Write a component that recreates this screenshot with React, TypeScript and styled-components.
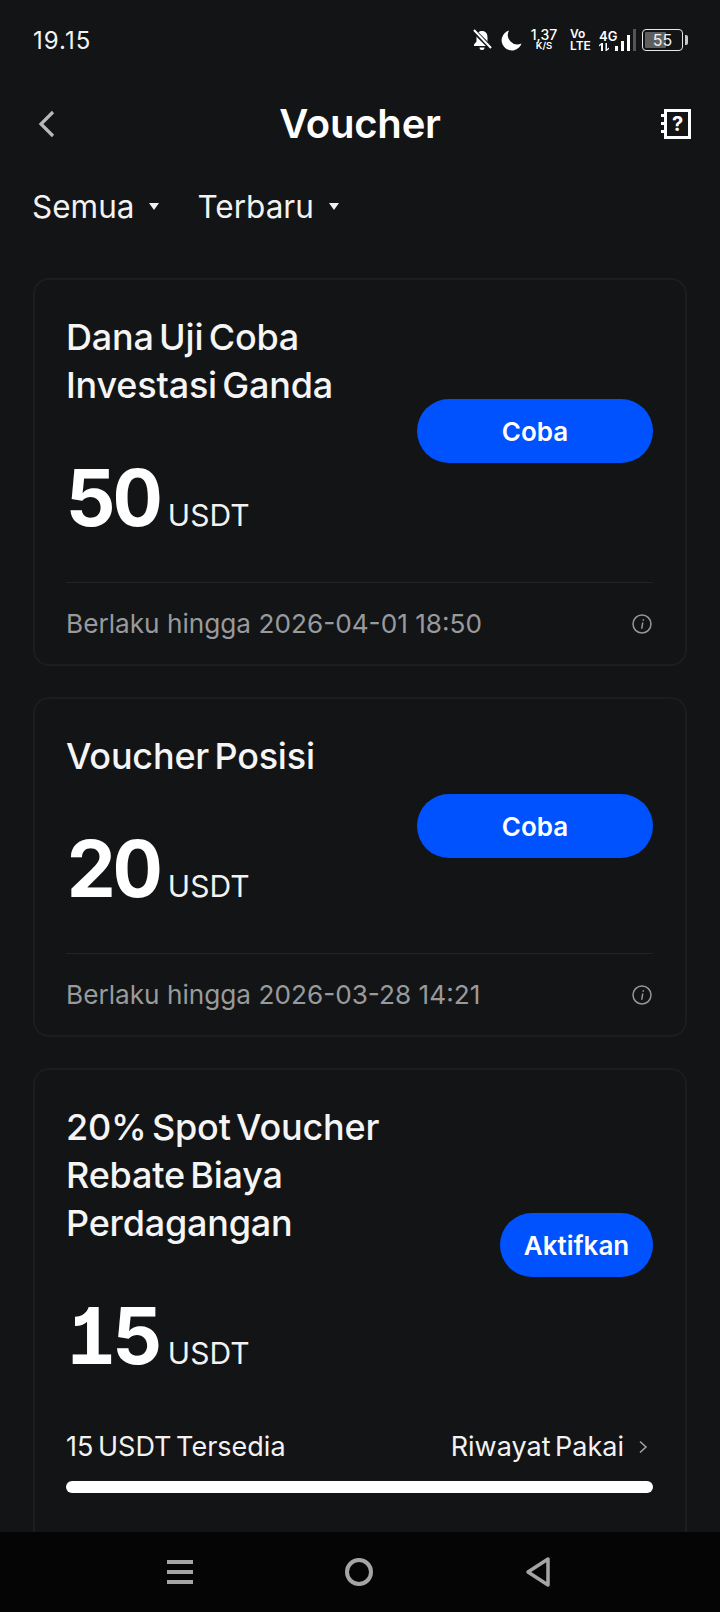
import React, { FC } from "react";
import styled, { createGlobalStyle } from "styled-components";

const GlobalStyle = createGlobalStyle`
  html, body {
    margin: 0;
    padding: 0;
    background: #131416;
  }
  * {
    box-sizing: border-box;
  }
`;

type Voucher = {
  title: string[];
  amount: string;
  action: string;
  expires?: string;
};

const vouchers: Voucher[] = [
  {
    title: ["Dana Uji Coba", "Investasi Ganda"],
    amount: "50",
    action: "Coba",
    expires: "Berlaku hingga 2026-04-01 18:50",
  },
  {
    title: ["Voucher Posisi"],
    amount: "20",
    action: "Coba",
    expires: "Berlaku hingga 2026-03-28 14:21",
  },
  {
    title: ["20% Spot Voucher", "Rebate Biaya", "Perdagangan"],
    amount: "15",
    action: "Aktifkan",
  },
];

const App: FC = () => {
  return (
    <Page>
      <GlobalStyle />
      <StatusBar>
        <Clock>19.15</Clock>
        <StatusIcons>
          <svg width="20" height="22" viewBox="0 0 20 22">
            <path d="M10 2c-3.600 0-5.500 2.600-5.500 6v4.500L2 15.500V17h16v-1.500l-2.500-3V8c0-3.400-1.900-6-5.500-6z" fill="#fff" />
            <path d="M7.500 18.500h5a2.500 2.500 0 0 1-5 0z" fill="#fff" />
            <path d="M1 1l18 18" stroke="#131416" strokeWidth="4.500" />
            <path d="M2 1l17 18" stroke="#fff" strokeWidth="2" />
          </svg>
          <MoonIcon width="21" height="21" viewBox="0 0 21 21">
            <path d="M8 .5A10.200 10.200 0 1 0 20.500 13.500 9.500 9.500 0 0 1 8 .5z" fill="#fff" />
          </MoonIcon>
          <Speed>
            <b>1,37</b>
            <small>K/S</small>
          </Speed>
          <VoLte>
            <span>Vo</span>
            <span>LTE</span>
          </VoLte>
          <Network>
            <span>4G</span>
            <svg width="12" height="8" viewBox="0 0 12 8">
              <path d="M2 8V2L0 3.500V2L2.500 0H4v8zM8 0v6l2-1.500V6L7.500 8H6.500V0z" fill="#fff" />
            </svg>
          </Network>
          <Signal>
            <SignalBar $height={5} />
            <SignalBar $height={10} />
            <SignalBar $height={16} />
            <SignalBar $height={22} $dim />
          </Signal>
          <Battery>
            <BatteryBody>
              <BatteryFill style={{ width: "55%" }} />
              <BatteryLevel>55</BatteryLevel>
            </BatteryBody>
            <BatteryCap />
          </Battery>
        </StatusIcons>
      </StatusBar>

      <Header>
        <BackButton>
          <svg width="20" height="28" viewBox="0 0 20 28" fill="none">
            <path d="M16 2L4 14l12 12" stroke="#b9b9ba" strokeWidth="3.200" />
          </svg>
        </BackButton>
        <Title>Voucher</Title>
        <HelpIcon>
          <HelpBook>?</HelpBook>
          <HelpRings>
            <i />
            <i />
            <i />
          </HelpRings>
        </HelpIcon>
      </Header>

      <Filters>
        <Filter>
          Semua
          <Caret />
        </Filter>
        <Filter>
          Terbaru
          <Caret />
        </Filter>
      </Filters>

      <List>
        {vouchers.map((voucher) => (
          <Card key={voucher.amount}>
            <CardMain>
              <div>
                <CardTitle>
                  {voucher.title.map((line) => (
                    <div key={line}>{line}</div>
                  ))}
                </CardTitle>
                <AmountRow>
                  <Amount>{voucher.amount}</Amount>
                  <Unit>USDT</Unit>
                </AmountRow>
              </div>
              <ActionButton $wide={voucher.action === "Coba"}>{voucher.action}</ActionButton>
            </CardMain>
            {voucher.expires ? (
              <CardFooter>
                <Expiry>{voucher.expires}</Expiry>
                <InfoIcon width="20" height="20" viewBox="0 0 20 20" fill="none">
                  <circle cx="10" cy="10" r="9" stroke="#969798" strokeWidth="1.500" />
                  <path d="M10.700 5.200h1.500l-.3 1.600h-1.500zM10 8.500h1.500l-1 6.300H9z" fill="#969798" />
                </InfoIcon>
              </CardFooter>
            ) : (
              <Usage>
                <UsageLabels>
                  <span>15 USDT Tersedia</span>
                  <UsageLink>
                    Riwayat Pakai
                    <svg width="10" height="14" viewBox="0 0 10 14" fill="none">
                      <path d="M2 1.500L8 7l-6 5.500" stroke="#a5a5a6" strokeWidth="1.500" />
                    </svg>
                  </UsageLink>
                </UsageLabels>
                <Progress />
              </Usage>
            )}
          </Card>
        ))}
      </List>

      <NavBar>
        <Burger>
          <i />
          <i />
          <i />
        </Burger>
        <HomeRing />
        <svg width="26" height="32" viewBox="0 0 26 32" fill="none">
          <path d="M23 3v26L3 16z" stroke="#a5a5a5" strokeWidth="3.500" strokeLinejoin="round" />
        </svg>
      </NavBar>
    </Page>
  );
};

const Page = styled.div`
  display: flex;
  flex-direction: column;
  width: 720px;
  height: 1612px;
  overflow: hidden;
  background: #131416;
  color: #fff;
  font-family: Inter, "Liberation Sans", sans-serif;
`;

const StatusBar = styled.div`
  flex: none;
  display: flex;
  align-items: center;
  justify-content: space-between;
  height: 80px;
  padding: 0 32px 0 33px;
`;

const Clock = styled.span`
  font-size: 24px;
  letter-spacing: 1px;
  color: #f2f2f2;
`;

const StatusIcons = styled.div`
  display: flex;
  align-items: center;
  color: #fff;
`;

const MoonIcon = styled.svg`
  margin-left: 9px;
`;

const Speed = styled.div`
  display: flex;
  flex-direction: column;
  align-items: center;
  width: 28px;
  margin-left: 8px;
  line-height: 11px;

  b {
    font-size: 14px;
    font-weight: 500;
  }
  small {
    font-size: 9.500px;
    font-weight: 600;
  }
`;

const VoLte = styled.div`
  display: flex;
  flex-direction: column;
  width: 20px;
  margin-left: 12px;
  font-size: 12px;
  font-weight: 600;
  line-height: 12px;
`;

const Network = styled.div`
  display: flex;
  flex-direction: column;
  width: 16px;
  margin-left: 9px;
  font-size: 13px;
  font-weight: 600;
  line-height: 13px;
`;

const Signal = styled.div`
  display: flex;
  align-items: flex-end;
  gap: 3px;
  height: 22px;
`;

const SignalBar = styled.i<{ $height: number; $dim?: boolean }>`
  width: 3px;
  height: ${(p) => p.$height}px;
  background: ${(p) => (p.$dim ? "#555" : "#fff")};
`;

const Battery = styled.div`
  display: flex;
  align-items: center;
  gap: 2px;
  margin-left: 6px;
`;

const BatteryBody = styled.div`
  position: relative;
  display: flex;
  align-items: center;
  justify-content: center;
  width: 41px;
  height: 22px;
  padding: 2px;
  border: 1.500px solid #e8e8e8;
  border-radius: 4px;
`;

const BatteryFill = styled.div`
  position: absolute;
  left: 2px;
  top: 2px;
  bottom: 2px;
  background: #5f5f5f;
  border-radius: 1px;
`;

const BatteryLevel = styled.span`
  position: relative;
  font-size: 16px;
  color: #f0f0f0;
`;

const BatteryCap = styled.div`
  width: 3px;
  height: 10px;
  background: #c8c8c8;
  border-radius: 0 2px 2px 0;
`;

const Header = styled.div`
  flex: none;
  display: flex;
  align-items: center;
  justify-content: space-between;
  height: 87px;
  padding: 0 29px 0 37px;
`;

const BackButton = styled.div`
  display: flex;
  width: 22px;
`;

const Title = styled.h1`
  margin: 0;
  font-size: 40px;
  font-weight: 600;
  letter-spacing: -0.200px;
`;

const HelpIcon = styled.div`
  position: relative;
  width: 30px;
  height: 30px;
`;

const HelpBook = styled.div`
  position: absolute;
  right: 0;
  top: 0;
  width: 27px;
  height: 30px;
  border: 3px solid #fff;
  font-size: 20px;
  font-weight: 700;
  line-height: 24px;
  text-align: center;
`;

const HelpRings = styled.div`
  position: absolute;
  left: 0;
  top: 5px;
  display: flex;
  flex-direction: column;
  gap: 5px;

  i {
    display: block;
    width: 4px;
    height: 3px;
    background: #fff;
  }
`;

const Filters = styled.div`
  flex: none;
  display: flex;
  align-items: center;
  gap: 38px;
  height: 78px;
  padding: 0 32px;
`;

const Filter = styled.div`
  display: flex;
  align-items: center;
  gap: 15px;
  font-size: 31.500px;
  color: #f2f2f2;
`;

const Caret = styled.i`
  width: 0;
  height: 0;
  border-left: 5.500px solid transparent;
  border-right: 5.500px solid transparent;
  border-top: 7px solid #f2f2f2;
`;

const List = styled.div`
  flex: 1;
  min-height: 0;
  overflow: hidden;
  display: flex;
  flex-direction: column;
  gap: 31px;
  padding: 33px 33px 0;
`;

const Card = styled.section`
  flex: none;
  padding: 33px 32px 0 31px;
  border: 2px solid #1c1d20;
  border-radius: 16px;
`;

const CardMain = styled.div`
  display: flex;
  align-items: center;
  justify-content: space-between;
`;

const CardTitle = styled.div`
  font-size: 36px;
  font-weight: 500;
  line-height: 48px;
  letter-spacing: -0.200px;
  word-spacing: -4px;
  color: #f5f5f5;
`;

const AmountRow = styled.div`
  display: flex;
  align-items: baseline;
  gap: 9px;
  margin-top: 42px;
  height: 94px;
`;

const Amount = styled.span`
  font-size: 78px;
  font-weight: 700;
  line-height: 94px;
  letter-spacing: -4px;
  font-feature-settings: "tnum", "cv01";
`;

const Unit = styled.span`
  font-size: 30px;
  color: #f2f2f2;
`;

const ActionButton = styled.div<{ $wide: boolean }>`
  display: flex;
  align-items: center;
  justify-content: center;
  flex: none;
  width: ${(p) => (p.$wide ? "236px" : "153px")};
  height: 64px;
  margin-top: 4px;
  border-radius: 32px;
  background: #0052ff;
  font-size: 26px;
  font-weight: 600;
`;

const CardFooter = styled.div`
  display: flex;
  align-items: center;
  justify-content: space-between;
  height: 82px;
  margin-top: 37px;
  border-top: 1px solid #222326;
`;

const Expiry = styled.span`
  font-size: 26.200px;
  color: #999a9c;
`;

const InfoIcon = styled.svg`
  margin-right: 1px;
`;

const Usage = styled.div`
  margin-top: 47px;
  padding-bottom: 80px;
`;

const UsageLabels = styled.div`
  display: flex;
  align-items: center;
  justify-content: space-between;
  font-size: 27px;
  word-spacing: -3px;
  color: #f2f2f2;
`;

const UsageLink = styled.span`
  display: flex;
  align-items: center;
  gap: 14px;
  padding-right: 5px;
`;

const Progress = styled.div`
  height: 12px;
  margin-top: 18px;
  border-radius: 6px;
  background: #fff;
`;

const NavBar = styled.div`
  flex: none;
  display: flex;
  align-items: center;
  justify-content: space-between;
  height: 80px;
  padding: 0 169px 0 167px;
  background: #050505;
`;

const Burger = styled.div`
  display: flex;
  flex-direction: column;
  gap: 6px;

  i {
    display: block;
    width: 26px;
    height: 4px;
    background: #a5a5a5;
  }
`;

const HomeRing = styled.div`
  width: 28px;
  height: 28px;
  border: 4px solid #a5a5a5;
  border-radius: 50%;
`;

export default App;
